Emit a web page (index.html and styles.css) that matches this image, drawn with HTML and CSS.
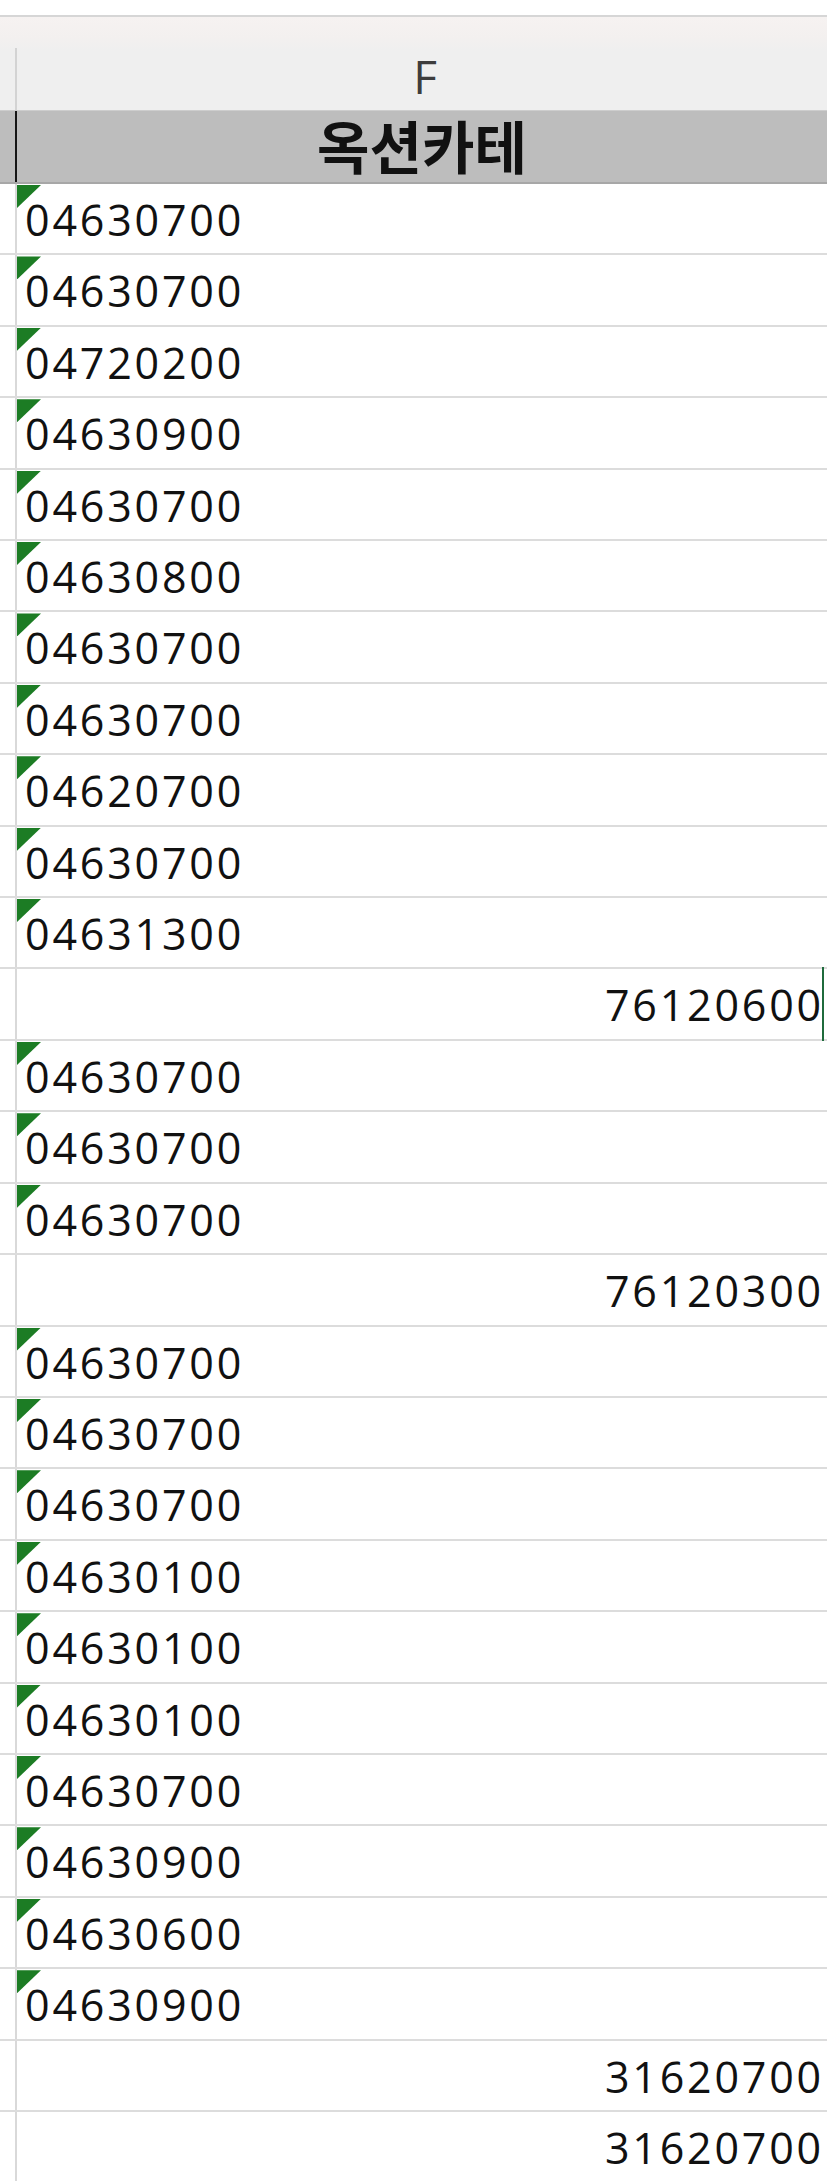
FILE: index.html
```html
<!DOCTYPE html>
<html lang="ko">
<head>
<meta charset="utf-8">
<title>Sheet</title>
<link rel="stylesheet" href="styles.css">
</head>
<body>
<div class="sheet">
  <div class="top"></div>
  <div class="colhead"><div class="stub"></div><div class="colname">F</div></div>
  <div class="row head"><div class="stub"></div><div class="cell">옥션카테</div></div>
  <div class="row"><div class="stub"></div><div class="cell txt">04630700</div></div>
  <div class="row"><div class="stub"></div><div class="cell txt">04630700</div></div>
  <div class="row"><div class="stub"></div><div class="cell txt">04720200</div></div>
  <div class="row"><div class="stub"></div><div class="cell txt">04630900</div></div>
  <div class="row"><div class="stub"></div><div class="cell txt">04630700</div></div>
  <div class="row"><div class="stub"></div><div class="cell txt">04630800</div></div>
  <div class="row"><div class="stub"></div><div class="cell txt">04630700</div></div>
  <div class="row"><div class="stub"></div><div class="cell txt">04630700</div></div>
  <div class="row"><div class="stub"></div><div class="cell txt">04620700</div></div>
  <div class="row"><div class="stub"></div><div class="cell txt">04630700</div></div>
  <div class="row"><div class="stub"></div><div class="cell txt">04631300</div></div>
  <div class="row"><div class="stub"></div><div class="cell num active">76120600</div></div>
  <div class="row"><div class="stub"></div><div class="cell txt">04630700</div></div>
  <div class="row"><div class="stub"></div><div class="cell txt">04630700</div></div>
  <div class="row"><div class="stub"></div><div class="cell txt">04630700</div></div>
  <div class="row"><div class="stub"></div><div class="cell num">76120300</div></div>
  <div class="row"><div class="stub"></div><div class="cell txt">04630700</div></div>
  <div class="row"><div class="stub"></div><div class="cell txt">04630700</div></div>
  <div class="row"><div class="stub"></div><div class="cell txt">04630700</div></div>
  <div class="row"><div class="stub"></div><div class="cell txt">04630100</div></div>
  <div class="row"><div class="stub"></div><div class="cell txt">04630100</div></div>
  <div class="row"><div class="stub"></div><div class="cell txt">04630100</div></div>
  <div class="row"><div class="stub"></div><div class="cell txt">04630700</div></div>
  <div class="row"><div class="stub"></div><div class="cell txt">04630900</div></div>
  <div class="row"><div class="stub"></div><div class="cell txt">04630600</div></div>
  <div class="row"><div class="stub"></div><div class="cell txt">04630900</div></div>
  <div class="row"><div class="stub"></div><div class="cell num">31620700</div></div>
  <div class="row"><div class="stub"></div><div class="cell num">31620700</div></div>
</div>
</body>
</html>
```

FILE: styles.css
```css
html, body {
  margin: 0;
  padding: 0;
  background: #ffffff;
}

body {
  width: 827px;
  height: 2181px;
  overflow: hidden;
}

.sheet {
  width: 827px;
  display: flex;
  flex-direction: column;
}

.top {
  height: 15px;
  background: #ffffff;
  border-bottom: 2px solid #d6d6d6;
}

.colhead {
  height: 94px;
  box-sizing: border-box;
  display: flex;
  background: linear-gradient(to bottom, #f6f2f1 0, #f3f0ef 20px, #efefef 34px, #efefef 100%);
  border-bottom: 1px solid #cdcdcd;
}

.stub {
  width: 15px;
  flex: none;
}

.colname {
  flex: 1;
  border-left: 2px solid transparent;
  border-image: linear-gradient(to bottom, transparent 0, transparent 34%, #d3d3d3 34%, #d3d3d3 100%) 1;
  text-align: center;
  font-family: "Open Sans", "Liberation Sans", sans-serif;
  font-size: 46px;
  line-height: 46px;
  color: #3d3d3d;
  padding-top: 36px;
  padding-left: 6px;
  box-sizing: border-box;
}

.row {
  height: 71.42px;
  box-sizing: border-box;
  display: flex;
  border-bottom: 2px solid #dcdcdc;
}

.row .cell {
  flex: 1;
  position: relative;
  border-left: 2px solid #d9d9d9;
  font-family: "Open Sans", "Liberation Sans", sans-serif;
  font-size: 43px;
  font-weight: 500;
  line-height: 42px;
  letter-spacing: 2.8px;
  color: #111111;
  padding: 15px 3px 0 8px;
  white-space: nowrap;
}

.row.head {
  height: 73px;
  background: #bdbdbd;
  border-bottom: 2px solid #a7a7a7;
}

.row.head .cell {
  border-left: 2px solid #161616;
  font-family: "Noto Sans CJK KR", "Noto Sans CJK SC", sans-serif;
  font-weight: 700;
  font-size: 57px;
  line-height: 56px;
  letter-spacing: 0;
  color: #111111;
  text-align: center;
  padding: 5px 0 0 0;
}

.cell.txt::before {
  content: "";
  position: absolute;
  left: 0;
  top: 1px;
  width: 24px;
  height: 23px;
  background: #1c7c24;
  clip-path: polygon(0 0, 100% 0, 0 100%);
}

.cell.num {
  text-align: right;
}

.cell.active::after {
  content: "";
  position: absolute;
  right: 3px;
  top: -2px;
  bottom: -2px;
  width: 2px;
  background: #1f6b3c;
}
```
